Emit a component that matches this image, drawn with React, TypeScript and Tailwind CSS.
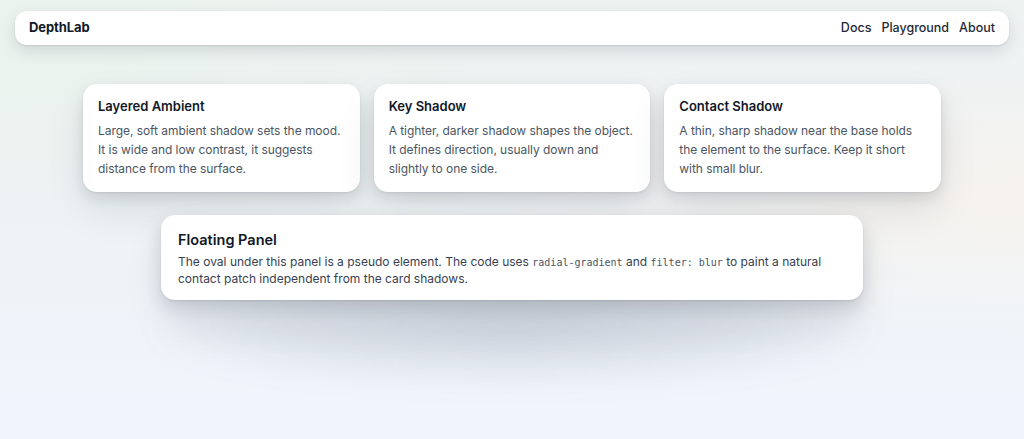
const cards = [
  {
    title: 'Layered Ambient',
    body: 'Large, soft ambient shadow sets the mood. It is wide and low contrast, it suggests distance from the surface.',
  },
  {
    title: 'Key Shadow',
    body: 'A tighter, darker shadow shapes the object. It defines direction, usually down and slightly to one side.',
  },
  {
    title: 'Contact Shadow',
    body: 'A thin, sharp shadow near the base holds the element to the surface. Keep it short with small blur.',
  },
];

const Card = ({ title, body }: { title: string; body: string }) => (
  <div className="rounded-[14px] bg-white px-[15px] pt-[13px] pb-[14px] shadow-[0_1px_2px_rgba(15,23,42,0.08),0_6px_14px_rgba(15,23,42,0.10),0_18px_40px_rgba(15,23,42,0.09)]">
    <h3 className="text-[13px] font-semibold leading-[18px] text-[#111827]">{title}</h3>
    <p className="mt-[6px] text-[12px] leading-[19px] tracking-[-0.05px] text-[#4b5563]">{body}</p>
  </div>
);

export default function App() {
  return (
    <div
      className="min-h-screen h-[439px] overflow-hidden px-[15px] pt-[11px] bg-[radial-gradient(ellipse_at_0%_10%,#eaf3ee_0%,transparent_45%),radial-gradient(ellipse_at_100%_45%,#f6f3ee_0%,transparent_40%),linear-gradient(180deg,#eef2f1_0%,#eff3f7_55%,#f0f4fc_100%)]"
      style={{ fontFamily: 'Inter, "Noto Sans", sans-serif' }}
    >
      <nav className="flex h-[34px] items-center justify-between rounded-xl bg-white pl-[14px] pr-[14px] shadow-[0_1px_2px_rgba(15,23,42,0.10),0_6px_16px_rgba(15,23,42,0.12)]">
        <span className="text-[13px] font-bold tracking-[-0.1px] text-[#111827]">DepthLab</span>
        <div className="flex items-center gap-[10px] text-[12.5px] font-medium text-[#1f2937]">
          <a>Docs</a>
          <a>Playground</a>
          <a>About</a>
        </div>
      </nav>

      <main className="mt-[39px] flex flex-col items-center">
        <div className="grid w-[858px] grid-cols-3 gap-[14px]">
          {cards.map((c) => (
            <Card key={c.title} {...c} />
          ))}
        </div>

        <div className="relative mt-[23px] w-[702px]">
          <div className="absolute left-0 right-0 top-[60px] h-[100px] rounded-[50%] bg-[radial-gradient(ellipse_at_center,rgba(100,116,139,0.26)_0%,rgba(100,116,139,0.12)_55%,transparent_78%)] blur-[16px]" />
          <div className="relative rounded-[14px] bg-white px-[17px] pt-[15px] pb-[14px] shadow-[0_1px_2px_rgba(15,23,42,0.10),0_8px_18px_rgba(15,23,42,0.14),0_20px_40px_rgba(15,23,42,0.08)]">
            <h3 className="text-[14.5px] font-semibold leading-[20px] text-[#111827]">Floating Panel</h3>
            <p className="mt-[4px] text-[12px] leading-[15.5px] text-[#374151]">
              The oval under this panel is a pseudo element. The code uses{' '}
              <code className="text-[10px] leading-[15.5px] text-[#4b5563]" style={{ fontFamily: '"DejaVu Sans Mono", monospace' }}>
                radial-gradient
              </code>{' '}
              and{' '}
              <code className="text-[10px] leading-[15.5px] text-[#4b5563]" style={{ fontFamily: '"DejaVu Sans Mono", monospace' }}>
                filter: blur
              </code>{' '}
              to paint a natural contact patch independent from the card shadows.
            </p>
          </div>
        </div>
      </main>
    </div>
  );
}
